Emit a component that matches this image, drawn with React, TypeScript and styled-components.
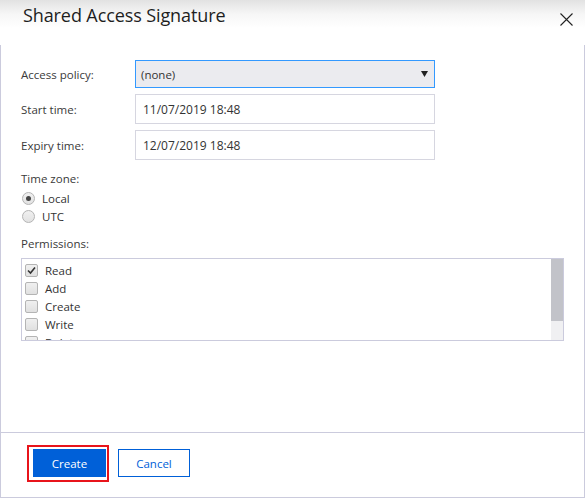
import styled, { createGlobalStyle } from 'styled-components';

const GlobalStyle = createGlobalStyle`
  html, body {
    margin: 0;
    padding: 0;
    background: #ffffff;
  }
  body {
    font-family: 'Open Sans', 'Noto Sans', sans-serif;
    color: #333333;
  }
`;

const Dialog = styled.div`
  width: 585px;
  height: 498px;
  display: flex;
  flex-direction: column;
  box-sizing: border-box;
`;

const Header = styled.div`
  height: 45px;
  flex-shrink: 0;
  display: flex;
  align-items: flex-start;
  justify-content: space-between;
  padding: 3px 9px 0 23px;
  box-sizing: border-box;
  background: linear-gradient(to bottom, #e2e2e2 0px, #f6f6f6 14px, #ffffff 28px);
`;

const Title = styled.h1`
  margin: 0;
  font-size: 18px;
  font-weight: 400;
  color: #1e1e1e;
  letter-spacing: -0.1px;
`;

const CloseButton = styled.button`
  width: 20px;
  height: 20px;
  margin-top: 6px;
  padding: 0;
  border: none;
  background: none;
  display: flex;
  align-items: center;
  justify-content: center;
  cursor: pointer;
`;

const Body = styled.div`
  flex: 1;
  border-left: 1px solid #cbcbdd;
  border-right: 1px solid #cbcbdd;
  padding: 15px 20px 0 20px;
  display: flex;
  flex-direction: column;
`;

const FieldGrid = styled.div`
  display: grid;
  grid-template-columns: 114px 300px;
  row-gap: 6px;
  align-items: center;
`;

const Label = styled.label`
  font-size: 11.5px;
  color: #3a3a3a;
`;

const Select = styled.div`
  height: 28px;
  box-sizing: border-box;
  border: 1px solid #3399ff;
  background: #ebebef;
  display: flex;
  align-items: center;
  justify-content: space-between;
  padding: 0 6px 0 5px;
  font-size: 11.5px;
  color: #333333;
`;

const TextInput = styled.div`
  height: 30px;
  box-sizing: border-box;
  border: 1px solid #d6d6e0;
  background: #ffffff;
  display: flex;
  align-items: center;
  padding: 0 7px;
  font-size: 12px;
  color: #333333;
`;

const Section = styled.div<{ $top: number }>`
  margin-top: ${(p) => p.$top}px;
  display: flex;
  flex-direction: column;
`;

const SectionLabel = styled.div`
  font-size: 11.5px;
  color: #3a3a3a;
  height: 16px;
  line-height: 16px;
  margin-bottom: 2px;
`;

const OptionRow = styled.div`
  height: 18px;
  flex-shrink: 0;
  display: flex;
  align-items: center;
  gap: 7px;
  font-size: 11.5px;
  color: #333333;
`;

const Radio = styled.span<{ $checked?: boolean }>`
  width: 11px;
  height: 11px;
  border-radius: 50%;
  border: 1px solid #b4b4b4;
  background: linear-gradient(#f0f0f0, #e2e2e2);
  display: flex;
  align-items: center;
  justify-content: center;
  margin-left: 1px;
  &::after {
    content: '';
    width: 5px;
    height: 5px;
    border-radius: 50%;
    background: ${(p) => (p.$checked ? '#444444' : 'transparent')};
  }
`;

const ListBox = styled.div`
  width: 543px;
  height: 83px;
  box-sizing: border-box;
  border: 1px solid #cbcbdd;
  display: flex;
  overflow: hidden;
`;

const ListItems = styled.div`
  flex: 1;
  padding: 2px 0 0 3px;
  display: flex;
  flex-direction: column;
  overflow: hidden;
`;

const Checkbox = styled.span<{ $checked?: boolean }>`
  width: 11px;
  height: 11px;
  flex-shrink: 0;
  border: 1px solid #b4b4b4;
  border-radius: 2px;
  background: linear-gradient(#f0f0f0, #e0e0e0);
  display: flex;
  align-items: center;
  justify-content: center;
`;

const ScrollTrack = styled.div`
  width: 12px;
  background: #f0f0f2;
  display: flex;
  flex-direction: column;
`;

const ScrollThumb = styled.div`
  height: 62px;
  background: #c2c3c9;
`;

const Footer = styled.div`
  height: 66px;
  flex-shrink: 0;
  box-sizing: border-box;
  border: 1px solid #cbcbdd;
  display: flex;
  align-items: flex-start;
  padding: 12px 0 0 26px;
  gap: 9px;
`;

const Highlight = styled.div`
  border: 2px solid #e8141b;
  padding: 2px 1px 3px 4px;
  display: flex;
`;

const Button = styled.button<{ $primary?: boolean }>`
  height: 28px;
  width: ${(p) => (p.$primary ? 73 : 72)}px;
  box-sizing: border-box;
  border: 1px solid #0060d8;
  background: ${(p) => (p.$primary ? '#0060d8' : '#ffffff')};
  color: ${(p) => (p.$primary ? '#ffffff' : '#0060d8')};
  font-family: 'Open Sans', 'Noto Sans', sans-serif;
  font-size: 11.5px;
  padding: 0;
  cursor: pointer;
`;

const Spacer = styled.div`
  margin-top: 4px;
`;

const permissions = [
  { name: 'Read', checked: true },
  { name: 'Add', checked: false },
  { name: 'Create', checked: false },
  { name: 'Write', checked: false },
  { name: 'Delete', checked: false },
];

export default function App() {
  return (
    <Dialog>
      <GlobalStyle />
      <Header>
        <Title>Shared Access Signature</Title>
        <CloseButton aria-label="Close">
          <svg width="13" height="13" viewBox="0 0 13 13">
            <path d="M0.5 0.5 L12.5 12.5 M12.5 0.5 L0.5 12.5" stroke="#222" strokeWidth="1.1" fill="none" />
          </svg>
        </CloseButton>
      </Header>
      <Body>
        <FieldGrid>
          <Label>Access policy:</Label>
          <Select>
            <span>(none)</span>
            <svg width="7" height="6" viewBox="0 0 7 6">
              <path d="M0 0 H7 L3.5 6 Z" fill="#222" />
            </svg>
          </Select>
          <Label>Start time:</Label>
          <TextInput>11/07/2019 18:48</TextInput>
          <Label>Expiry time:</Label>
          <TextInput>12/07/2019 18:48</TextInput>
        </FieldGrid>

        <Section $top={11}>
          <SectionLabel>Time zone:</SectionLabel>
          <OptionRow>
            <Radio $checked />
            Local
          </OptionRow>
          <OptionRow>
            <Radio />
            UTC
          </OptionRow>
        </Section>

        <Section $top={11}>
          <SectionLabel>Permissions:</SectionLabel>
          <Spacer />
          <ListBox>
            <ListItems>
              {permissions.map((p) => (
                <OptionRow key={p.name}>
                  <Checkbox $checked={p.checked}>
                    {p.checked && (
                      <svg width="9" height="9" viewBox="0 0 9 9">
                        <path d="M1 4.5 L3.5 7 L8 1.5" stroke="#333" strokeWidth="1.6" fill="none" />
                      </svg>
                    )}
                  </Checkbox>
                  {p.name}
                </OptionRow>
              ))}
            </ListItems>
            <ScrollTrack>
              <ScrollThumb />
            </ScrollTrack>
          </ListBox>
        </Section>
      </Body>
      <Footer>
        <Highlight>
          <Button $primary>Create</Button>
        </Highlight>
        <Spacer>
          <Button>Cancel</Button>
        </Spacer>
      </Footer>
    </Dialog>
  );
}
